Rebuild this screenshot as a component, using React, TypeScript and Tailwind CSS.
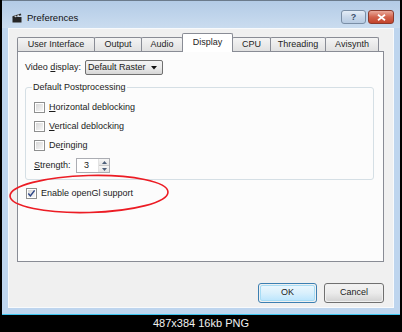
import React from "react";

function Check({ checked }: { checked?: boolean }) {
  return (
    <span className="w-[11px] h-[11px] border border-[#8e8f8f] bg-white p-[1px] flex shrink-0">
      <span className="flex-1 bg-gradient-to-br from-[#d8d8d8] to-[#f7f7f7] flex items-center justify-center">
        {checked && (
          <svg width="9" height="9" viewBox="0 0 9 9" className="-m-[1px]">
            <path d="M1.3 4.6 L3.4 6.9 L7.6 1.4" stroke="#2c4587" strokeWidth="1.5" fill="none" />
          </svg>
        )}
      </span>
    </span>
  );
}

function Tab({ label, w, selected }: { label: string; w: string; selected?: boolean }) {
  if (selected) {
    return (
      <div
        className={`${w} h-[19px] -ml-px -mb-px relative z-10 bg-white border border-b-0 border-[#898c95] rounded-t-[2px] flex items-center justify-center text-[#1e1e1e]`}
      >
        {label}
      </div>
    );
  }
  return (
    <div
      className={`${w} h-[14px] -ml-px bg-gradient-to-b from-[#f4f4f4] to-[#e1e1e1] border border-b-0 border-[#898c95] rounded-t-[2px] flex items-center justify-center text-[#1e1e1e]`}
    >
      {label}
    </div>
  );
}

export default function App() {
  return (
    <div className="relative w-[402px] h-[332px] bg-black flex flex-col overflow-hidden font-['Liberation_Sans',Arial,sans-serif] text-[9px] text-[#1b1b1b]">
      {/* Window */}
      <div className="mx-[2px] h-[315px] flex flex-col bg-[#bed5ee] border-t border-[#6b7b8c] border-b border-b-[#3dc6f1]">
        {/* Title bar */}
        <div className="h-[27px] flex items-start pl-[10px] pr-[6px] bg-gradient-to-b from-[#b3cbe6] to-[#cadcef]">
          <div className="mt-[10px] flex items-center">
            <svg width="10" height="10" viewBox="0 0 10 10">
              <rect x="0.5" y="4" width="9" height="5.5" fill="#262626" />
              <path d="M0.3 3.3 L8.8 0.6 L9.3 2.2 L0.8 4.6 Z" fill="#2e2e2e" />
              <path d="M2.3 2.9 L3.6 2.4 L4.4 3.9 L3.1 4.3 Z M5.2 2 L6.5 1.6 L7.3 3.1 L6 3.5 Z" fill="#d0d0d0" />
            </svg>
            <span className="ml-[5px] text-[9.5px] text-[#111]">Preferences</span>
          </div>
          <div className="flex-1" />
          <div className="mt-[9px] flex gap-[2px]">
            <div className="w-[25px] h-[14px] rounded-[3px] border border-[#7a8ea6] bg-gradient-to-b from-[#e4edf7] via-[#c9d8ea] to-[#b7cbe2] flex items-center justify-center text-[#3a4f6a] text-[9px] font-bold leading-none">
              ?
            </div>
            <div className="w-[26px] h-[14px] rounded-[3px] border border-[#8c3a2c] bg-gradient-to-b from-[#e9a99b] via-[#d2634d] to-[#c2432b] flex items-center justify-center">
              <svg width="9" height="7" viewBox="0 0 9 7">
                <path d="M1 0.8 L8 6.2 M8 0.8 L1 6.2" stroke="white" strokeWidth="1.8" />
              </svg>
            </div>
          </div>
        </div>

        {/* Client area */}
        <div className="flex-1 mx-[6px] mb-[6px] bg-[#f0f0f0] border border-[#f8fafc] flex flex-col pl-[8px] pr-[9px] pt-[4px]">
          {/* Tabs */}
          <div className="h-[18px] flex items-end pl-px">
            <Tab label="User Interface" w="w-[78px]" />
            <Tab label="Output" w="w-[48px]" />
            <Tab label="Audio" w="w-[42px]" />
            <Tab label="Display" w="w-[51px]" selected />
            <Tab label="CPU" w="w-[39px]" />
            <Tab label="Threading" w="w-[56px]" />
            <Tab label="Avisynth" w="w-[54px]" />
          </div>
          {/* Pane */}
          <div className="h-[211px] bg-[#fcfcfc] border border-[#898c95] flex flex-col pl-[7px] pr-[9px] pt-[8px]">
            <div className="flex items-center h-[15px]">
              <span className="w-[60px]">
                Video <span className="underline">d</span>isplay:
              </span>
              <div className="w-[78px] h-[15px] rounded-[2px] border border-[#707070] bg-gradient-to-b from-[#f4f4f4] via-[#ebebeb] to-[#d6d6d6] flex items-center pl-[2px] pr-[5px]">
                <span className="flex-1">Default Raster</span>
                <svg width="6" height="4" viewBox="0 0 6 4">
                  <path d="M0 0 H6 L3 3.5 Z" fill="#111" />
                </svg>
              </div>
            </div>

            <fieldset className="mt-[6px] border border-[#d5dfe5] rounded-[3px] pl-[8px] pb-[6px]">
              <legend className="ml-[-2px] px-[1px] leading-[12px]">Default Postprocessing</legend>
              <div className="pt-[5px] flex flex-col">
                <div className="h-[19px] flex items-center gap-[4px]">
                  <Check />
                  <span>
                    <span className="underline">H</span>orizontal deblocking
                  </span>
                </div>
                <div className="h-[19px] flex items-center gap-[4px]">
                  <Check />
                  <span>
                    <span className="underline">V</span>ertical deblocking
                  </span>
                </div>
                <div className="h-[19px] flex items-center gap-[4px]">
                  <Check />
                  <span>
                    De<span className="underline">r</span>inging
                  </span>
                </div>
                <div className="mt-[3px] h-[15px] flex items-center">
                  <span className="w-[42px]">
                    <span className="underline">S</span>trength:
                  </span>
                  <div className="w-[34px] h-[15px] border border-[#abadb3] bg-white flex">
                    <span className="flex-1 pl-[7px] flex items-center">3</span>
                    <div className="w-[11px] flex flex-col border-l border-[#e3e3e3]">
                      <div className="flex-1 bg-gradient-to-b from-[#f6f6f6] to-[#e4e4e4] border-b border-[#c9c9c9] flex items-center justify-center">
                        <svg width="5" height="3" viewBox="0 0 5 3">
                          <path d="M0 3 L2.5 0 L5 3 Z" fill="#4b5d78" />
                        </svg>
                      </div>
                      <div className="flex-1 bg-gradient-to-b from-[#f6f6f6] to-[#e4e4e4] flex items-center justify-center">
                        <svg width="5" height="3" viewBox="0 0 5 3">
                          <path d="M0 0 L2.5 3 L5 0 Z" fill="#4b5d78" />
                        </svg>
                      </div>
                    </div>
                  </div>
                </div>
              </div>
            </fieldset>

            <div className="mt-[6px] h-[15px] flex items-center gap-[4px] pl-[1px]">
              <Check checked />
              <span>Enable openGl support</span>
            </div>
          </div>

          {/* Buttons */}
          <div className="mt-[21px] flex justify-end gap-[7px]">
            <div className="w-[59px] h-[20px] rounded-[3px] border border-[#3c7fb1] p-px">
              <div className="w-full h-full rounded-[2px] border border-[#a6dcf5] bg-gradient-to-b from-[#eaf6fd] via-[#d9f0fc] to-[#bee6fd] flex items-center justify-center">
                OK
              </div>
            </div>
            <div className="w-[60px] h-[20px] rounded-[3px] border border-[#707070] p-px">
              <div className="w-full h-full rounded-[2px] bg-gradient-to-b from-[#f2f2f2] via-[#ebebeb] to-[#d4d4d4] flex items-center justify-center">
                Cancel
              </div>
            </div>
          </div>
        </div>
      </div>

      {/* Caption */}
      <div className="flex-1 flex items-center justify-center text-[11px] text-[#f0f0f0] leading-none">
        487x384 16kb PNG
      </div>

      {/* Red annotation ellipse */}
      <svg className="absolute left-0 top-0 pointer-events-none" width="402" height="332" viewBox="0 0 402 332">
        <ellipse cx="89" cy="194" rx="79" ry="18.5" transform="rotate(-1.5 89 194)" fill="none" stroke="#ec1c24" strokeWidth="1.6" />
      </svg>
    </div>
  );
}
